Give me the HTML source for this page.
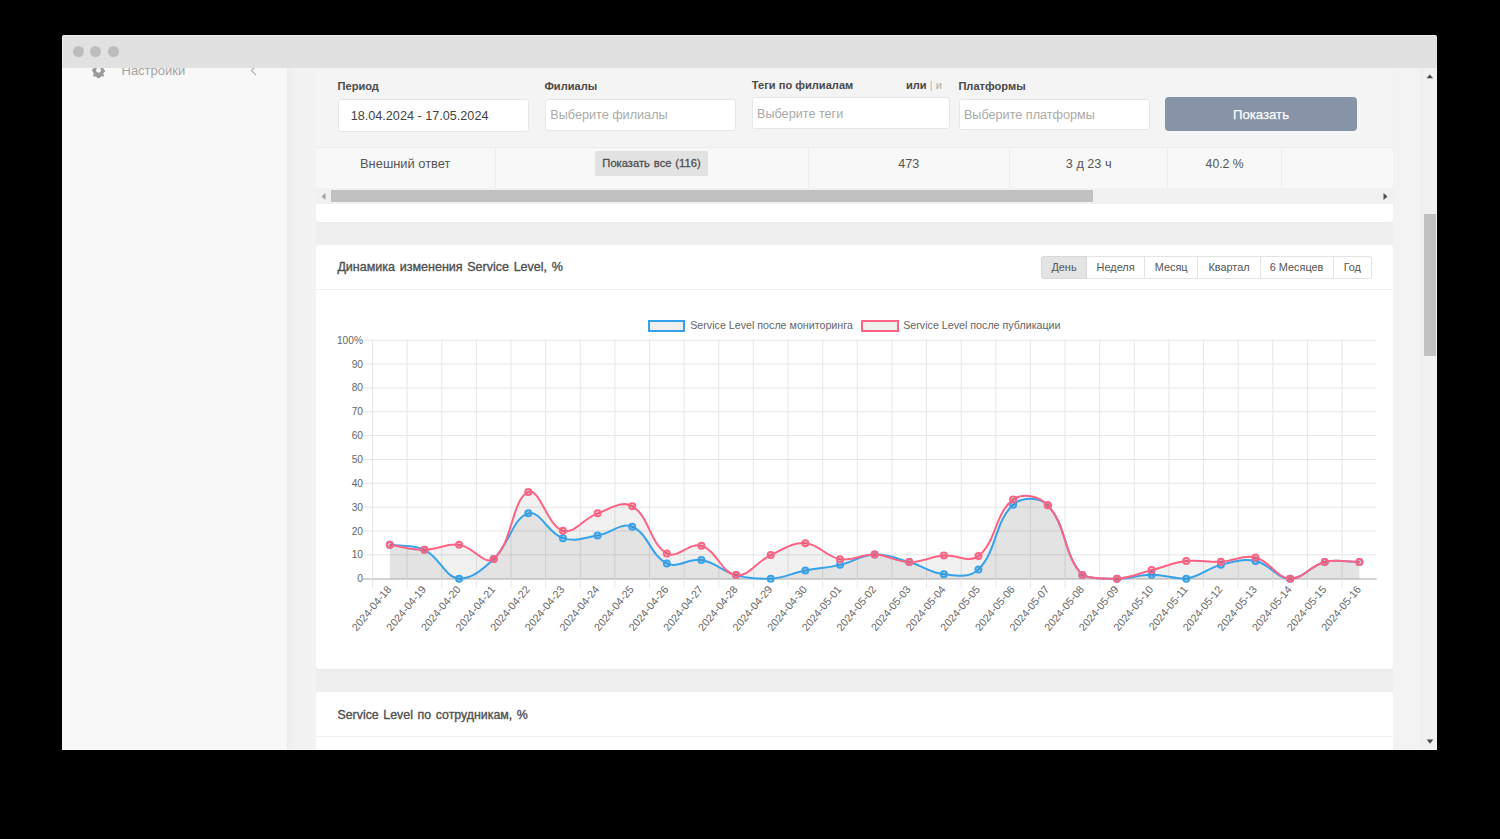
<!DOCTYPE html>
<html><head><meta charset="utf-8"><title>Service Level</title>
<style>
html,body{margin:0;padding:0;background:#000;width:1500px;height:839px;overflow:hidden;}
body{font-family:"Liberation Sans", sans-serif;}
.win{position:absolute;left:62px;top:35px;width:1375px;height:715.3px;overflow:hidden;border-radius:3px 3px 0 0;background:#f7f7f7;}
.page{position:absolute;left:-62px;top:-35px;width:1500px;height:839px;}
.b{position:absolute;}
.t{position:absolute;white-space:nowrap;font-family:"Liberation Sans", sans-serif;}
svg text{font-family:"Liberation Sans", sans-serif;}
.dot{width:11px;height:11px;border-radius:50%;background:#bdbdbd;}
</style></head><body>
<div class="win"><div class="page">
<div class="b" style="left:62px;top:67px;width:225px;height:684px;background:#f8f8f8;"></div>
<div class="b" style="left:287px;top:67px;width:1px;height:684px;background:#ececec;"></div>
<div class="b" style="left:288px;top:67px;width:1133px;height:684px;background:linear-gradient(90deg,#eeeeee 0,#f1f1f1 6px,#f3f3f3 20px);"></div>
<div class="b" style="left:316px;top:67px;width:1077px;height:684px;background:#efefef;"></div>
<div class="b" style="left:1421px;top:67px;width:16px;height:684px;background:linear-gradient(90deg,#ececec,#f1f1f1 15%,#f1f1f1);"></div>
<div class="b" style="left:1424px;top:214px;width:12px;height:142px;background:#c1c1c1;"></div>
<svg class="b" style="left:1421px;top:67px" width="16" height="683"><path d="M5.5 11.2 L8.8 7.4 L12.1 11.2 Z" fill="#4a4a4a"/><path d="M5.7 672.6 L12.3 672.6 L9 676.7 Z" fill="#4a4a4a"/></svg>
<svg class="b" style="left:91.85px;top:63px" width="13.1" height="14.74" viewBox="2 4 16 18"><path fill="#9a9a9a" d="M10 4.5l1.6.3.6 2 1.5.9 2-.6 1.1 1.3-.9 1.9.3 1.7 1.7 1.2v1.6l-1.7 1.2-.3 1.7.9 1.9-1.1 1.3-2-.6-1.5.9-.6 2-1.6.3-1.6-.3-.6-2-1.5-.9-2 .6-1.1-1.3.9-1.9-.3-1.7L2.1 13.6V12l1.7-1.2.3-1.7-.9-1.9 1.1-1.3 2 .6 1.5-.9.6-2z M10 9.8a3 3 0 1 0 0 6 3 3 0 1 0 0-6z"/></svg>
<div class="t" style="left:121.5px;top:64.00px;font-size:13px;line-height:13px;font-weight:normal;color:#a3a3a3;">Настройки</div>
<svg class="b" style="left:248px;top:62.5px" width="12" height="14"><path d="M8 3 L3.5 7.5 L8 12" stroke="#b0b0b0" stroke-width="1.2" fill="none"/></svg>
<div class="b" style="left:316px;top:40px;width:1077px;height:182px;background:#fff;border-radius:0 0 3px 3px;box-shadow:0 1px 3px rgba(0,0,0,0.03);"></div>
<div class="b" style="left:316px;top:40px;width:1077px;height:107px;background:#f4f4f4;"></div>
<div class="b" style="left:316px;top:147px;width:1077px;height:41px;background:#f8f8f8;border-top:1px solid #ebebeb;box-sizing:border-box;"></div>
<div class="b" style="left:495px;top:147px;width:1px;height:41px;background:#ececec;"></div>
<div class="b" style="left:808px;top:147px;width:1px;height:41px;background:#ececec;"></div>
<div class="b" style="left:1009px;top:147px;width:1px;height:41px;background:#ececec;"></div>
<div class="b" style="left:1167px;top:147px;width:1px;height:41px;background:#ececec;"></div>
<div class="b" style="left:1281px;top:147px;width:1px;height:41px;background:#ececec;"></div>
<div class="b" style="left:316px;top:188px;width:1077px;height:15.599999999999994px;background:#f1f1f1;"></div>
<div class="b" style="left:331px;top:190px;width:762px;height:12px;background:#c1c1c1;"></div>
<svg class="b" style="left:316px;top:188.6px" width="1077" height="15"><path d="M9.5 4 L5.5 7.5 L9.5 11 Z" fill="#a3a3a3"/><path d="M1067.5 4 L1071.5 7.5 L1067.5 11 Z" fill="#505050"/></svg>
<div class="t" style="left:337.5px;top:80.80px;font-size:11.1px;line-height:11.1px;font-weight:bold;color:#4a4a4a;">Период</div>
<div class="t" style="left:544.4px;top:80.80px;font-size:11.1px;line-height:11.1px;font-weight:bold;color:#4a4a4a;">Филиалы</div>
<div class="t" style="left:751.8px;top:79.80px;font-size:11.1px;line-height:11.1px;font-weight:bold;color:#4a4a4a;">Теги по филиалам</div>
<div class="t" style="left:906px;top:79.80px;font-size:11.1px;line-height:11.1px;font-weight:normal;color:#444;"><b style="color:#444">или</b> <span style="color:#b5b5b5">|</span> <span style="color:#aaa">и</span></div>
<div class="t" style="left:958.4px;top:80.80px;font-size:11.1px;line-height:11.1px;font-weight:bold;color:#4a4a4a;">Платформы</div>
<div class="b" style="left:338px;top:98.5px;width:191px;height:33.5px;background:#fff;border:1px solid #e6e6e6;border-radius:3px;box-sizing:border-box;"></div>
<div class="b" style="left:544.5px;top:98.6px;width:191.5px;height:32.0px;background:#fff;border:1px solid #e6e6e6;border-radius:3px;box-sizing:border-box;"></div>
<div class="b" style="left:751.5px;top:97.4px;width:198.70000000000005px;height:32.0px;background:#fff;border:1px solid #e6e6e6;border-radius:3px;box-sizing:border-box;"></div>
<div class="b" style="left:958.6px;top:98.7px;width:191.39999999999998px;height:31.700000000000003px;background:#fff;border:1px solid #e6e6e6;border-radius:3px;box-sizing:border-box;"></div>
<div class="b" style="left:1165px;top:97px;width:192px;height:34px;background:#8794a7;border-radius:4px;"></div>
<div class="t" style="left:350.7px;top:109.69px;font-size:12.65px;line-height:12.65px;font-weight:normal;color:#444;">18.04.2024 - 17.05.2024</div>
<div class="t" style="left:550.3px;top:108.59px;font-size:12.65px;line-height:12.65px;font-weight:normal;color:#aaa;">Выберите филиалы</div>
<div class="t" style="left:757px;top:107.89px;font-size:12.65px;line-height:12.65px;font-weight:normal;color:#aaa;">Выберите теги</div>
<div class="t" style="left:963.9px;top:108.59px;font-size:12.65px;line-height:12.65px;font-weight:normal;color:#aaa;">Выберите платформы</div>
<div class="t" style="left:961px;width:600px;text-align:center;top:108.03px;font-size:13.2px;line-height:13.2px;font-weight:normal;color:#fbfcfd;-webkit-text-stroke:0.25px #fbfcfd;">Показать</div>
<div class="t" style="left:360px;top:157.58px;font-size:12.9px;line-height:12.9px;font-weight:normal;color:#555;">Внешний ответ</div>
<div class="b" style="left:595px;top:151px;width:113px;height:25px;background:#e2e2e2;border-radius:2px;"></div>
<div class="t" style="left:351.5px;width:600px;text-align:center;top:158.02px;font-size:11.2px;line-height:11.2px;font-weight:normal;color:#505050;-webkit-text-stroke:0.3px #505050;word-spacing:0.8px;">Показать все (116)</div>
<div class="t" style="left:608.7px;width:600px;text-align:center;top:157.92px;font-size:12.5px;line-height:12.5px;font-weight:normal;color:#555;">473</div>
<div class="t" style="left:788.7px;width:600px;text-align:center;top:157.75px;font-size:12.7px;line-height:12.7px;font-weight:normal;color:#555;">3 д 23 ч</div>
<div class="t" style="left:924.5999999999999px;width:600px;text-align:center;top:158.17px;font-size:12.2px;line-height:12.2px;font-weight:normal;color:#555;">40.2 %</div>
<div class="b" style="left:316px;top:245px;width:1077px;height:424px;background:#fff;border-radius:3px;box-shadow:0 1px 3px rgba(0,0,0,0.03);"></div>
<div class="b" style="left:316px;top:289px;width:1077px;height:1px;background:#f0f0f0;"></div>
<div class="t" style="left:337.4px;top:261.49px;font-size:12.53px;line-height:12.53px;font-weight:normal;color:#505050;-webkit-text-stroke:0.35px #505050;word-spacing:1.2px;">Динамика изменения Service Level, %</div>
<div class="b" style="left:1041px;top:256px;width:330.5px;height:23px;border:1px solid #e3e3e3;border-radius:3px;box-sizing:border-box;background:#fff;"></div>
<div class="b" style="left:1041px;top:256px;width:46px;height:23px;background:#e4e4e4;border:1px solid #d8d8d8;border-radius:3px 0 0 3px;box-sizing:border-box;"></div>
<div class="b" style="left:1144px;top:256px;width:1px;height:23px;background:#e3e3e3;"></div>
<div class="b" style="left:1197px;top:256px;width:1px;height:23px;background:#e3e3e3;"></div>
<div class="b" style="left:1260px;top:256px;width:1px;height:23px;background:#e3e3e3;"></div>
<div class="b" style="left:1333px;top:256px;width:1px;height:23px;background:#e3e3e3;"></div>
<div class="t" style="left:764px;width:600px;text-align:center;top:261.77px;font-size:10.9px;line-height:10.9px;font-weight:normal;color:#555;">День</div>
<div class="t" style="left:815.5999999999999px;width:600px;text-align:center;top:261.77px;font-size:10.9px;line-height:10.9px;font-weight:normal;color:#555;">Неделя</div>
<div class="t" style="left:871.2px;width:600px;text-align:center;top:261.77px;font-size:10.9px;line-height:10.9px;font-weight:normal;color:#555;">Месяц</div>
<div class="t" style="left:929px;width:600px;text-align:center;top:261.77px;font-size:10.9px;line-height:10.9px;font-weight:normal;color:#555;">Квартал</div>
<div class="t" style="left:996.5999999999999px;width:600px;text-align:center;top:261.77px;font-size:10.9px;line-height:10.9px;font-weight:normal;color:#555;">6 Месяцев</div>
<div class="t" style="left:1052.3px;width:600px;text-align:center;top:261.77px;font-size:10.9px;line-height:10.9px;font-weight:normal;color:#555;">Год</div>
<div class="b" style="left:648px;top:320px;width:37px;height:12px;border:2px solid #36a2eb;background:#f0f0f0;box-sizing:border-box;"></div>
<div class="b" style="left:861px;top:320px;width:37.60000000000002px;height:12px;border:2px solid #ff6384;background:#f0f0f0;box-sizing:border-box;"></div>
<div class="t" style="left:690.2px;top:319.94px;font-size:10.7px;line-height:10.7px;font-weight:normal;color:#666;">Service Level после мониторинга</div>
<div class="t" style="left:903.2px;top:319.94px;font-size:10.7px;line-height:10.7px;font-weight:normal;color:#666;">Service Level после публикации</div>
<svg class="b" style="left:0;top:0" width="1500" height="839" viewBox="0 0 1500 839"><line x1="363" y1="340.20" x2="1376.7" y2="340.20" stroke="#e6e6e6" stroke-width="1"/><line x1="363" y1="364.05" x2="1376.7" y2="364.05" stroke="#e6e6e6" stroke-width="1"/><line x1="363" y1="387.90" x2="1376.7" y2="387.90" stroke="#e6e6e6" stroke-width="1"/><line x1="363" y1="411.75" x2="1376.7" y2="411.75" stroke="#e6e6e6" stroke-width="1"/><line x1="363" y1="435.60" x2="1376.7" y2="435.60" stroke="#e6e6e6" stroke-width="1"/><line x1="363" y1="459.45" x2="1376.7" y2="459.45" stroke="#e6e6e6" stroke-width="1"/><line x1="363" y1="483.30" x2="1376.7" y2="483.30" stroke="#e6e6e6" stroke-width="1"/><line x1="363" y1="507.15" x2="1376.7" y2="507.15" stroke="#e6e6e6" stroke-width="1"/><line x1="363" y1="531.00" x2="1376.7" y2="531.00" stroke="#e6e6e6" stroke-width="1"/><line x1="363" y1="554.85" x2="1376.7" y2="554.85" stroke="#e6e6e6" stroke-width="1"/><line x1="363" y1="579.00" x2="1376.7" y2="579.00" stroke="#c6c6c6" stroke-width="1.5"/><line x1="372.50" y1="340.2" x2="372.50" y2="588" stroke="#e6e6e6" stroke-width="1"/><line x1="407.13" y1="340.2" x2="407.13" y2="588" stroke="#e6e6e6" stroke-width="1"/><line x1="441.76" y1="340.2" x2="441.76" y2="588" stroke="#e6e6e6" stroke-width="1"/><line x1="476.38" y1="340.2" x2="476.38" y2="588" stroke="#e6e6e6" stroke-width="1"/><line x1="511.01" y1="340.2" x2="511.01" y2="588" stroke="#e6e6e6" stroke-width="1"/><line x1="545.64" y1="340.2" x2="545.64" y2="588" stroke="#e6e6e6" stroke-width="1"/><line x1="580.27" y1="340.2" x2="580.27" y2="588" stroke="#e6e6e6" stroke-width="1"/><line x1="614.89" y1="340.2" x2="614.89" y2="588" stroke="#e6e6e6" stroke-width="1"/><line x1="649.52" y1="340.2" x2="649.52" y2="588" stroke="#e6e6e6" stroke-width="1"/><line x1="684.15" y1="340.2" x2="684.15" y2="588" stroke="#e6e6e6" stroke-width="1"/><line x1="718.78" y1="340.2" x2="718.78" y2="588" stroke="#e6e6e6" stroke-width="1"/><line x1="753.40" y1="340.2" x2="753.40" y2="588" stroke="#e6e6e6" stroke-width="1"/><line x1="788.03" y1="340.2" x2="788.03" y2="588" stroke="#e6e6e6" stroke-width="1"/><line x1="822.66" y1="340.2" x2="822.66" y2="588" stroke="#e6e6e6" stroke-width="1"/><line x1="857.29" y1="340.2" x2="857.29" y2="588" stroke="#e6e6e6" stroke-width="1"/><line x1="891.91" y1="340.2" x2="891.91" y2="588" stroke="#e6e6e6" stroke-width="1"/><line x1="926.54" y1="340.2" x2="926.54" y2="588" stroke="#e6e6e6" stroke-width="1"/><line x1="961.17" y1="340.2" x2="961.17" y2="588" stroke="#e6e6e6" stroke-width="1"/><line x1="995.80" y1="340.2" x2="995.80" y2="588" stroke="#e6e6e6" stroke-width="1"/><line x1="1030.42" y1="340.2" x2="1030.42" y2="588" stroke="#e6e6e6" stroke-width="1"/><line x1="1065.05" y1="340.2" x2="1065.05" y2="588" stroke="#e6e6e6" stroke-width="1"/><line x1="1099.68" y1="340.2" x2="1099.68" y2="588" stroke="#e6e6e6" stroke-width="1"/><line x1="1134.31" y1="340.2" x2="1134.31" y2="588" stroke="#e6e6e6" stroke-width="1"/><line x1="1168.93" y1="340.2" x2="1168.93" y2="588" stroke="#e6e6e6" stroke-width="1"/><line x1="1203.56" y1="340.2" x2="1203.56" y2="588" stroke="#e6e6e6" stroke-width="1"/><line x1="1238.19" y1="340.2" x2="1238.19" y2="588" stroke="#e6e6e6" stroke-width="1"/><line x1="1272.82" y1="340.2" x2="1272.82" y2="588" stroke="#e6e6e6" stroke-width="1"/><line x1="1307.44" y1="340.2" x2="1307.44" y2="588" stroke="#e6e6e6" stroke-width="1"/><line x1="1342.07" y1="340.2" x2="1342.07" y2="588" stroke="#e6e6e6" stroke-width="1"/><text x="363" y="343.70" text-anchor="end" font-size="10.2" fill="#666">100%</text><text x="363" y="367.55" text-anchor="end" font-size="10.2" fill="#666">90</text><text x="363" y="391.40" text-anchor="end" font-size="10.2" fill="#666">80</text><text x="363" y="415.25" text-anchor="end" font-size="10.2" fill="#666">70</text><text x="363" y="439.10" text-anchor="end" font-size="10.2" fill="#666">60</text><text x="363" y="462.95" text-anchor="end" font-size="10.2" fill="#666">50</text><text x="363" y="486.80" text-anchor="end" font-size="10.2" fill="#666">40</text><text x="363" y="510.65" text-anchor="end" font-size="10.2" fill="#666">30</text><text x="363" y="534.50" text-anchor="end" font-size="10.2" fill="#666">20</text><text x="363" y="558.35" text-anchor="end" font-size="10.2" fill="#666">10</text><text x="363" y="582.20" text-anchor="end" font-size="10.2" fill="#666">0</text><text transform="translate(389.11,587.1) rotate(-50)" x="0" y="3.8" text-anchor="end" font-size="10.75" fill="#666">2024-04-18</text><text transform="translate(423.74,587.1) rotate(-50)" x="0" y="3.8" text-anchor="end" font-size="10.75" fill="#666">2024-04-19</text><text transform="translate(458.37,587.1) rotate(-50)" x="0" y="3.8" text-anchor="end" font-size="10.75" fill="#666">2024-04-20</text><text transform="translate(493.00,587.1) rotate(-50)" x="0" y="3.8" text-anchor="end" font-size="10.75" fill="#666">2024-04-21</text><text transform="translate(527.62,587.1) rotate(-50)" x="0" y="3.8" text-anchor="end" font-size="10.75" fill="#666">2024-04-22</text><text transform="translate(562.25,587.1) rotate(-50)" x="0" y="3.8" text-anchor="end" font-size="10.75" fill="#666">2024-04-23</text><text transform="translate(596.88,587.1) rotate(-50)" x="0" y="3.8" text-anchor="end" font-size="10.75" fill="#666">2024-04-24</text><text transform="translate(631.51,587.1) rotate(-50)" x="0" y="3.8" text-anchor="end" font-size="10.75" fill="#666">2024-04-25</text><text transform="translate(666.13,587.1) rotate(-50)" x="0" y="3.8" text-anchor="end" font-size="10.75" fill="#666">2024-04-26</text><text transform="translate(700.76,587.1) rotate(-50)" x="0" y="3.8" text-anchor="end" font-size="10.75" fill="#666">2024-04-27</text><text transform="translate(735.39,587.1) rotate(-50)" x="0" y="3.8" text-anchor="end" font-size="10.75" fill="#666">2024-04-28</text><text transform="translate(770.02,587.1) rotate(-50)" x="0" y="3.8" text-anchor="end" font-size="10.75" fill="#666">2024-04-29</text><text transform="translate(804.64,587.1) rotate(-50)" x="0" y="3.8" text-anchor="end" font-size="10.75" fill="#666">2024-04-30</text><text transform="translate(839.27,587.1) rotate(-50)" x="0" y="3.8" text-anchor="end" font-size="10.75" fill="#666">2024-05-01</text><text transform="translate(873.90,587.1) rotate(-50)" x="0" y="3.8" text-anchor="end" font-size="10.75" fill="#666">2024-05-02</text><text transform="translate(908.53,587.1) rotate(-50)" x="0" y="3.8" text-anchor="end" font-size="10.75" fill="#666">2024-05-03</text><text transform="translate(943.16,587.1) rotate(-50)" x="0" y="3.8" text-anchor="end" font-size="10.75" fill="#666">2024-05-04</text><text transform="translate(977.78,587.1) rotate(-50)" x="0" y="3.8" text-anchor="end" font-size="10.75" fill="#666">2024-05-05</text><text transform="translate(1012.41,587.1) rotate(-50)" x="0" y="3.8" text-anchor="end" font-size="10.75" fill="#666">2024-05-06</text><text transform="translate(1047.04,587.1) rotate(-50)" x="0" y="3.8" text-anchor="end" font-size="10.75" fill="#666">2024-05-07</text><text transform="translate(1081.67,587.1) rotate(-50)" x="0" y="3.8" text-anchor="end" font-size="10.75" fill="#666">2024-05-08</text><text transform="translate(1116.29,587.1) rotate(-50)" x="0" y="3.8" text-anchor="end" font-size="10.75" fill="#666">2024-05-09</text><text transform="translate(1150.92,587.1) rotate(-50)" x="0" y="3.8" text-anchor="end" font-size="10.75" fill="#666">2024-05-10</text><text transform="translate(1185.55,587.1) rotate(-50)" x="0" y="3.8" text-anchor="end" font-size="10.75" fill="#666">2024-05-11</text><text transform="translate(1220.18,587.1) rotate(-50)" x="0" y="3.8" text-anchor="end" font-size="10.75" fill="#666">2024-05-12</text><text transform="translate(1254.80,587.1) rotate(-50)" x="0" y="3.8" text-anchor="end" font-size="10.75" fill="#666">2024-05-13</text><text transform="translate(1289.43,587.1) rotate(-50)" x="0" y="3.8" text-anchor="end" font-size="10.75" fill="#666">2024-05-14</text><text transform="translate(1324.06,587.1) rotate(-50)" x="0" y="3.8" text-anchor="end" font-size="10.75" fill="#666">2024-05-15</text><text transform="translate(1358.69,587.1) rotate(-50)" x="0" y="3.8" text-anchor="end" font-size="10.75" fill="#666">2024-05-16</text><path d="M389.81,544.83 C403.66,546.84 412.34,543.92 424.44,549.84 C440.04,557.47 444.37,576.78 459.07,578.70 C472.07,578.70 482.32,569.64 493.70,558.90 C510.02,543.50 512.44,518.11 528.32,513.35 C540.15,509.81 547.69,533.27 562.95,538.16 C575.39,542.14 583.93,537.79 597.58,535.53 C611.63,533.21 620.72,522.08 632.21,526.71 C648.43,533.24 650.43,555.53 666.83,563.44 C678.14,568.89 688.18,557.86 701.46,560.10 C715.88,562.53 721.68,571.25 736.09,575.12 C749.38,578.69 757.01,578.70 770.72,578.70 C784.72,577.78 791.40,573.38 805.34,570.59 C819.10,567.84 826.32,568.02 839.97,564.87 C854.02,561.63 860.61,555.19 874.60,554.61 C888.31,554.04 895.63,558.16 909.23,562.00 C923.33,565.99 929.67,572.65 943.86,574.17 C957.37,575.61 969.54,578.36 978.48,569.40 C997.24,550.60 994.29,522.20 1013.11,504.77 C1022.00,496.53 1039.22,496.59 1047.74,505.24 C1066.92,524.73 1063.21,554.81 1082.37,575.12 C1090.91,578.70 1103.15,578.70 1116.99,578.70 C1130.85,578.60 1137.77,574.65 1151.62,574.65 C1165.47,574.65 1172.86,578.70 1186.25,578.70 C1200.56,576.68 1206.55,568.52 1220.88,564.87 C1234.26,561.46 1242.41,558.44 1255.50,561.05 C1270.11,563.97 1276.20,578.51 1290.13,578.70 C1303.91,578.70 1310.18,565.52 1324.76,562.00 C1337.89,558.84 1345.54,562.00 1359.39,562.00 L1359.39,578.7 L389.81,578.7 Z" fill="rgba(0,0,0,0.055)"/><path d="M389.81,544.83 C403.66,546.84 410.59,549.84 424.44,549.84 C438.29,549.84 445.68,543.08 459.07,544.83 C473.38,546.71 484.52,565.92 493.70,558.90 C512.22,544.74 511.93,498.55 528.32,491.89 C539.64,487.29 547.07,525.84 562.95,530.76 C574.77,534.43 583.09,518.49 597.58,513.35 C610.80,508.66 621.78,500.16 632.21,506.20 C649.48,516.19 649.58,543.56 666.83,553.42 C677.28,559.39 689.31,541.98 701.46,545.79 C717.01,550.66 721.37,573.15 736.09,575.12 C749.07,576.87 756.25,561.76 770.72,555.09 C783.96,548.98 791.77,542.37 805.34,543.16 C819.48,543.99 825.51,556.75 839.97,559.14 C853.21,561.33 860.84,554.04 874.60,554.61 C888.55,555.19 895.34,561.81 909.23,562.00 C923.04,562.20 929.89,556.77 943.86,555.57 C957.59,554.38 968.98,563.74 978.48,556.04 C996.68,541.32 995.00,512.80 1013.11,499.52 C1022.70,492.48 1039.14,495.86 1047.74,505.24 C1066.84,526.10 1063.21,554.81 1082.37,575.12 C1090.91,578.70 1103.31,578.70 1116.99,578.70 C1131.01,577.69 1137.79,573.64 1151.62,570.11 C1165.49,566.58 1172.17,562.75 1186.25,561.05 C1199.87,559.41 1207.08,562.48 1220.88,561.77 C1234.78,561.05 1242.70,554.34 1255.50,557.47 C1270.40,561.12 1275.90,577.77 1290.13,578.70 C1303.60,578.70 1310.18,565.52 1324.76,562.00 C1337.89,558.84 1345.54,562.00 1359.39,562.00 L1359.39,578.7 L389.81,578.7 Z" fill="rgba(0,0,0,0.055)"/><path d="M389.81,544.83 C403.66,546.84 412.34,543.92 424.44,549.84 C440.04,557.47 444.37,576.78 459.07,578.70 C472.07,578.70 482.32,569.64 493.70,558.90 C510.02,543.50 512.44,518.11 528.32,513.35 C540.15,509.81 547.69,533.27 562.95,538.16 C575.39,542.14 583.93,537.79 597.58,535.53 C611.63,533.21 620.72,522.08 632.21,526.71 C648.43,533.24 650.43,555.53 666.83,563.44 C678.14,568.89 688.18,557.86 701.46,560.10 C715.88,562.53 721.68,571.25 736.09,575.12 C749.38,578.69 757.01,578.70 770.72,578.70 C784.72,577.78 791.40,573.38 805.34,570.59 C819.10,567.84 826.32,568.02 839.97,564.87 C854.02,561.63 860.61,555.19 874.60,554.61 C888.31,554.04 895.63,558.16 909.23,562.00 C923.33,565.99 929.67,572.65 943.86,574.17 C957.37,575.61 969.54,578.36 978.48,569.40 C997.24,550.60 994.29,522.20 1013.11,504.77 C1022.00,496.53 1039.22,496.59 1047.74,505.24 C1066.92,524.73 1063.21,554.81 1082.37,575.12 C1090.91,578.70 1103.15,578.70 1116.99,578.70 C1130.85,578.60 1137.77,574.65 1151.62,574.65 C1165.47,574.65 1172.86,578.70 1186.25,578.70 C1200.56,576.68 1206.55,568.52 1220.88,564.87 C1234.26,561.46 1242.41,558.44 1255.50,561.05 C1270.11,563.97 1276.20,578.51 1290.13,578.70 C1303.91,578.70 1310.18,565.52 1324.76,562.00 C1337.89,558.84 1345.54,562.00 1359.39,562.00" fill="none" stroke="#36a2eb" stroke-width="2"/><circle cx="389.81" cy="544.83" r="3" fill="rgba(0,0,0,0.1)" stroke="#36a2eb" stroke-width="2"/><circle cx="424.44" cy="549.84" r="3" fill="rgba(0,0,0,0.1)" stroke="#36a2eb" stroke-width="2"/><circle cx="459.07" cy="578.70" r="3" fill="rgba(0,0,0,0.1)" stroke="#36a2eb" stroke-width="2"/><circle cx="493.70" cy="558.90" r="3" fill="rgba(0,0,0,0.1)" stroke="#36a2eb" stroke-width="2"/><circle cx="528.32" cy="513.35" r="3" fill="rgba(0,0,0,0.1)" stroke="#36a2eb" stroke-width="2"/><circle cx="562.95" cy="538.16" r="3" fill="rgba(0,0,0,0.1)" stroke="#36a2eb" stroke-width="2"/><circle cx="597.58" cy="535.53" r="3" fill="rgba(0,0,0,0.1)" stroke="#36a2eb" stroke-width="2"/><circle cx="632.21" cy="526.71" r="3" fill="rgba(0,0,0,0.1)" stroke="#36a2eb" stroke-width="2"/><circle cx="666.83" cy="563.44" r="3" fill="rgba(0,0,0,0.1)" stroke="#36a2eb" stroke-width="2"/><circle cx="701.46" cy="560.10" r="3" fill="rgba(0,0,0,0.1)" stroke="#36a2eb" stroke-width="2"/><circle cx="736.09" cy="575.12" r="3" fill="rgba(0,0,0,0.1)" stroke="#36a2eb" stroke-width="2"/><circle cx="770.72" cy="578.70" r="3" fill="rgba(0,0,0,0.1)" stroke="#36a2eb" stroke-width="2"/><circle cx="805.34" cy="570.59" r="3" fill="rgba(0,0,0,0.1)" stroke="#36a2eb" stroke-width="2"/><circle cx="839.97" cy="564.87" r="3" fill="rgba(0,0,0,0.1)" stroke="#36a2eb" stroke-width="2"/><circle cx="874.60" cy="554.61" r="3" fill="rgba(0,0,0,0.1)" stroke="#36a2eb" stroke-width="2"/><circle cx="909.23" cy="562.00" r="3" fill="rgba(0,0,0,0.1)" stroke="#36a2eb" stroke-width="2"/><circle cx="943.86" cy="574.17" r="3" fill="rgba(0,0,0,0.1)" stroke="#36a2eb" stroke-width="2"/><circle cx="978.48" cy="569.40" r="3" fill="rgba(0,0,0,0.1)" stroke="#36a2eb" stroke-width="2"/><circle cx="1013.11" cy="504.77" r="3" fill="rgba(0,0,0,0.1)" stroke="#36a2eb" stroke-width="2"/><circle cx="1047.74" cy="505.24" r="3" fill="rgba(0,0,0,0.1)" stroke="#36a2eb" stroke-width="2"/><circle cx="1082.37" cy="575.12" r="3" fill="rgba(0,0,0,0.1)" stroke="#36a2eb" stroke-width="2"/><circle cx="1116.99" cy="578.70" r="3" fill="rgba(0,0,0,0.1)" stroke="#36a2eb" stroke-width="2"/><circle cx="1151.62" cy="574.65" r="3" fill="rgba(0,0,0,0.1)" stroke="#36a2eb" stroke-width="2"/><circle cx="1186.25" cy="578.70" r="3" fill="rgba(0,0,0,0.1)" stroke="#36a2eb" stroke-width="2"/><circle cx="1220.88" cy="564.87" r="3" fill="rgba(0,0,0,0.1)" stroke="#36a2eb" stroke-width="2"/><circle cx="1255.50" cy="561.05" r="3" fill="rgba(0,0,0,0.1)" stroke="#36a2eb" stroke-width="2"/><circle cx="1290.13" cy="578.70" r="3" fill="rgba(0,0,0,0.1)" stroke="#36a2eb" stroke-width="2"/><circle cx="1324.76" cy="562.00" r="3" fill="rgba(0,0,0,0.1)" stroke="#36a2eb" stroke-width="2"/><circle cx="1359.39" cy="562.00" r="3" fill="rgba(0,0,0,0.1)" stroke="#36a2eb" stroke-width="2"/><path d="M389.81,544.83 C403.66,546.84 410.59,549.84 424.44,549.84 C438.29,549.84 445.68,543.08 459.07,544.83 C473.38,546.71 484.52,565.92 493.70,558.90 C512.22,544.74 511.93,498.55 528.32,491.89 C539.64,487.29 547.07,525.84 562.95,530.76 C574.77,534.43 583.09,518.49 597.58,513.35 C610.80,508.66 621.78,500.16 632.21,506.20 C649.48,516.19 649.58,543.56 666.83,553.42 C677.28,559.39 689.31,541.98 701.46,545.79 C717.01,550.66 721.37,573.15 736.09,575.12 C749.07,576.87 756.25,561.76 770.72,555.09 C783.96,548.98 791.77,542.37 805.34,543.16 C819.48,543.99 825.51,556.75 839.97,559.14 C853.21,561.33 860.84,554.04 874.60,554.61 C888.55,555.19 895.34,561.81 909.23,562.00 C923.04,562.20 929.89,556.77 943.86,555.57 C957.59,554.38 968.98,563.74 978.48,556.04 C996.68,541.32 995.00,512.80 1013.11,499.52 C1022.70,492.48 1039.14,495.86 1047.74,505.24 C1066.84,526.10 1063.21,554.81 1082.37,575.12 C1090.91,578.70 1103.31,578.70 1116.99,578.70 C1131.01,577.69 1137.79,573.64 1151.62,570.11 C1165.49,566.58 1172.17,562.75 1186.25,561.05 C1199.87,559.41 1207.08,562.48 1220.88,561.77 C1234.78,561.05 1242.70,554.34 1255.50,557.47 C1270.40,561.12 1275.90,577.77 1290.13,578.70 C1303.60,578.70 1310.18,565.52 1324.76,562.00 C1337.89,558.84 1345.54,562.00 1359.39,562.00" fill="none" stroke="#ff6384" stroke-width="2"/><circle cx="389.81" cy="544.83" r="3" fill="rgba(0,0,0,0.1)" stroke="#ff6384" stroke-width="2"/><circle cx="424.44" cy="549.84" r="3" fill="rgba(0,0,0,0.1)" stroke="#ff6384" stroke-width="2"/><circle cx="459.07" cy="544.83" r="3" fill="rgba(0,0,0,0.1)" stroke="#ff6384" stroke-width="2"/><circle cx="493.70" cy="558.90" r="3" fill="rgba(0,0,0,0.1)" stroke="#ff6384" stroke-width="2"/><circle cx="528.32" cy="491.89" r="3" fill="rgba(0,0,0,0.1)" stroke="#ff6384" stroke-width="2"/><circle cx="562.95" cy="530.76" r="3" fill="rgba(0,0,0,0.1)" stroke="#ff6384" stroke-width="2"/><circle cx="597.58" cy="513.35" r="3" fill="rgba(0,0,0,0.1)" stroke="#ff6384" stroke-width="2"/><circle cx="632.21" cy="506.20" r="3" fill="rgba(0,0,0,0.1)" stroke="#ff6384" stroke-width="2"/><circle cx="666.83" cy="553.42" r="3" fill="rgba(0,0,0,0.1)" stroke="#ff6384" stroke-width="2"/><circle cx="701.46" cy="545.79" r="3" fill="rgba(0,0,0,0.1)" stroke="#ff6384" stroke-width="2"/><circle cx="736.09" cy="575.12" r="3" fill="rgba(0,0,0,0.1)" stroke="#ff6384" stroke-width="2"/><circle cx="770.72" cy="555.09" r="3" fill="rgba(0,0,0,0.1)" stroke="#ff6384" stroke-width="2"/><circle cx="805.34" cy="543.16" r="3" fill="rgba(0,0,0,0.1)" stroke="#ff6384" stroke-width="2"/><circle cx="839.97" cy="559.14" r="3" fill="rgba(0,0,0,0.1)" stroke="#ff6384" stroke-width="2"/><circle cx="874.60" cy="554.61" r="3" fill="rgba(0,0,0,0.1)" stroke="#ff6384" stroke-width="2"/><circle cx="909.23" cy="562.00" r="3" fill="rgba(0,0,0,0.1)" stroke="#ff6384" stroke-width="2"/><circle cx="943.86" cy="555.57" r="3" fill="rgba(0,0,0,0.1)" stroke="#ff6384" stroke-width="2"/><circle cx="978.48" cy="556.04" r="3" fill="rgba(0,0,0,0.1)" stroke="#ff6384" stroke-width="2"/><circle cx="1013.11" cy="499.52" r="3" fill="rgba(0,0,0,0.1)" stroke="#ff6384" stroke-width="2"/><circle cx="1047.74" cy="505.24" r="3" fill="rgba(0,0,0,0.1)" stroke="#ff6384" stroke-width="2"/><circle cx="1082.37" cy="575.12" r="3" fill="rgba(0,0,0,0.1)" stroke="#ff6384" stroke-width="2"/><circle cx="1116.99" cy="578.70" r="3" fill="rgba(0,0,0,0.1)" stroke="#ff6384" stroke-width="2"/><circle cx="1151.62" cy="570.11" r="3" fill="rgba(0,0,0,0.1)" stroke="#ff6384" stroke-width="2"/><circle cx="1186.25" cy="561.05" r="3" fill="rgba(0,0,0,0.1)" stroke="#ff6384" stroke-width="2"/><circle cx="1220.88" cy="561.77" r="3" fill="rgba(0,0,0,0.1)" stroke="#ff6384" stroke-width="2"/><circle cx="1255.50" cy="557.47" r="3" fill="rgba(0,0,0,0.1)" stroke="#ff6384" stroke-width="2"/><circle cx="1290.13" cy="578.70" r="3" fill="rgba(0,0,0,0.1)" stroke="#ff6384" stroke-width="2"/><circle cx="1324.76" cy="562.00" r="3" fill="rgba(0,0,0,0.1)" stroke="#ff6384" stroke-width="2"/><circle cx="1359.39" cy="562.00" r="3" fill="rgba(0,0,0,0.1)" stroke="#ff6384" stroke-width="2"/></svg>
<div class="b" style="left:316px;top:692px;width:1077px;height:68px;background:#fff;border-radius:3px;"></div>
<div class="b" style="left:316px;top:736px;width:1077px;height:1px;background:#f0f0f0;"></div>
<div class="t" style="left:337.5px;top:708.93px;font-size:12.37px;line-height:12.37px;font-weight:normal;color:#505050;-webkit-text-stroke:0.35px #505050;word-spacing:1.2px;">Service Level по сотрудникам, %</div>
</div>
<div class="b" style="left:0;top:0;width:1375px;height:32.5px;background:#e1e1e1;box-shadow:inset 1px 1px 0 #ebebeb;"></div><div class="b dot" style="left:11px;top:11px"></div><div class="b dot" style="left:28px;top:11px"></div><div class="b dot" style="left:46px;top:11px"></div>
</div>
</body></html>
